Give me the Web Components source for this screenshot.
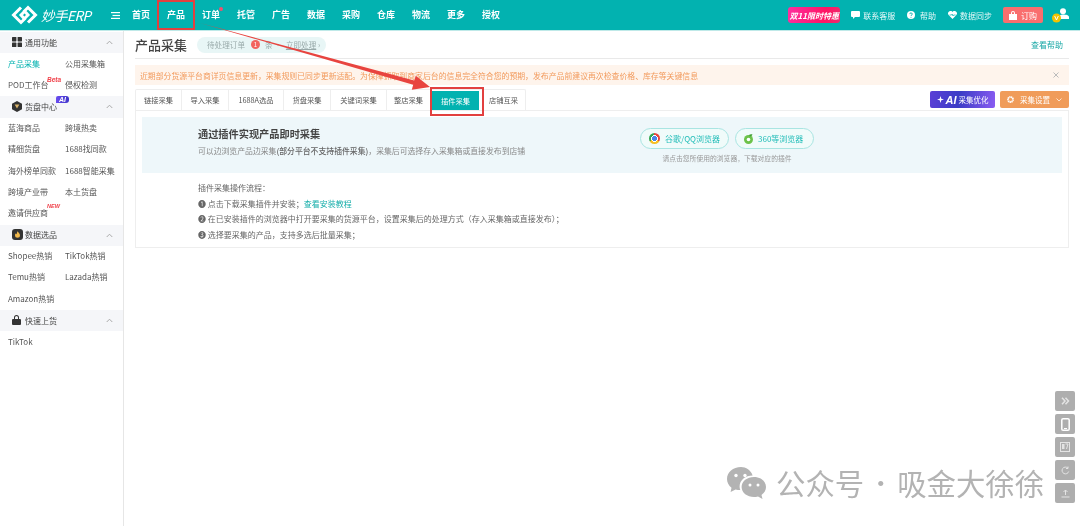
<!doctype html>
<html lang="zh">
<head>
<meta charset="utf-8">
<title>产品采集</title>
<style>
  html, body { margin: 0; height: 100%; background: #fff; overflow: hidden; }
  body { font: 8px "Noto Sans CJK SC", "Liberation Sans", sans-serif; color: #555; }
  app-shell { filter: blur(0.3px); }
</style>
</head>
<body>
<app-shell>
  <app-topbar slot="top">
    <nav-item>首页</nav-item>
    <nav-item>产品</nav-item>
    <nav-item dot>订单</nav-item>
    <nav-item>托管</nav-item>
    <nav-item>广告</nav-item>
    <nav-item>数据</nav-item>
    <nav-item>采购</nav-item>
    <nav-item>仓库</nav-item>
    <nav-item>物流</nav-item>
    <nav-item>更多</nav-item>
    <nav-item>授权</nav-item>
  </app-topbar>

  <side-nav slot="side">
    <side-group label="通用功能">
      <svg slot="icon" width="10" height="10" viewBox="0 0 10 10" fill="#333"><rect width="4.400" height="4.400" rx=".6"/><rect x="5.600" width="4.400" height="4.400" rx=".6"/><rect y="5.600" width="4.400" height="4.400" rx=".6"/><rect x="5.600" y="5.600" width="4.400" height="4.400" rx=".6"/></svg>
      <side-link active>产品采集</side-link>
      <side-link>公用采集箱</side-link>
      <side-link>POD工作台<mini-tag kind="beta">Beta</mini-tag></side-link>
      <side-link>侵权检测</side-link>
    </side-group>
    <side-group label="货盘中心">
      <svg slot="icon" width="10" height="11" viewBox="0 0 10 11"><path d="M5 0 10 2.800v5.400L5 11 0 8.200V2.800z" fill="#333"/><path d="M2.600 3.600h4.800L5 7.400z" fill="#d9b36a"/></svg>
      <mini-tag slot="tag" kind="ai">AI</mini-tag>
      <side-link>蓝海商品</side-link>
      <side-link>跨境热卖</side-link>
      <side-link>精细货盘</side-link>
      <side-link>1688找同款</side-link>
      <side-link>海外榜单同款</side-link>
      <side-link>1688智能采集</side-link>
      <side-link>跨境产业带</side-link>
      <side-link>本土货盘</side-link>
      <side-link>邀请供应商<mini-tag kind="new">NEW</mini-tag></side-link>
    </side-group>
    <side-group label="数据选品">
      <svg slot="icon" width="11" height="11" viewBox="0 0 11 11"><rect width="11" height="11" rx="3" fill="#333"/><path d="M5.500 2.200c.5 1.200 2.500 2 2.500 4.100a2.500 2.500 0 0 1-5 0c0-1 .5-1.500 1-2 .2.600.5.800.8.900-.1-1 .2-2.200.7-3z" fill="#f2b84b"/></svg>
      <side-link>Shopee热销</side-link>
      <side-link>TikTok热销</side-link>
      <side-link>Temu热销</side-link>
      <side-link>Lazada热销</side-link>
      <side-link>Amazon热销</side-link>
    </side-group>
    <side-group label="快速上货">
      <svg slot="icon" width="9" height="10" viewBox="0 0 9 10" fill="#333"><path d="M2 4V2.600a2.500 2.500 0 0 1 5 0V4H6V2.600a1.500 1.500 0 0 0-3 0V4z"/><rect y="4" width="9" height="6" rx="1"/></svg>
      <side-link>TikTok</side-link>
    </side-group>
  </side-nav>

  <collect-page slot="main">
    <page-head></page-head>
    <notice-bar>近期部分货源平台商详页信息更新，采集规则已同步更新适配。为保障抓取到商家后台的信息完全符合您的预期，发布产品前建议再次检查价格、库存等关键信息</notice-bar>
    <tab-bar>
      <tab-item style="width:46px">链接采集</tab-item>
      <tab-item style="width:47px">导入采集</tab-item>
      <tab-item style="width:55px">1688A选品</tab-item>
      <tab-item style="width:47px">货盘采集</tab-item>
      <tab-item style="width:56px">关键词采集</tab-item>
      <tab-item style="width:44px">整店采集</tab-item>
      <tab-item active style="width:47px">插件采集</tab-item>
      <tab-item style="width:43px">店铺互采</tab-item>
    </tab-bar>
    <plugin-panel></plugin-panel>
  </collect-page>

  <float-tools slot="over"></float-tools>
  <water-mark slot="over"></water-mark>
  <note-layer slot="over"></note-layer>
</app-shell>

<script>
// small helper: each element is a class with its own shadow root
function define(name, html) {
  const template = document.createElement("template");
  template.innerHTML = html;
  customElements.define(name, class extends HTMLElement {
    constructor() {
      super();
      this.attachShadow({ mode: "open" }).appendChild(template.content.cloneNode(true));
    }
    connectedCallback() {
      const label = this.shadowRoot.querySelector("[data-label]");
      if (label) label.textContent = this.getAttribute("label");
    }
  });
}

define("app-shell", `
<style>
  :host { display: grid; grid-template: 31px 1fr / 124px 1fr; width: 1080px; height: 526px; position: relative; overflow: hidden; }
  ::slotted([slot=top]) { grid-column: 1 / 3; }
</style>
<slot name="top"></slot>
<slot name="side"></slot>
<slot name="main"></slot>
<slot name="over"></slot>`);

define("app-topbar", `
<style>
  :host { display: flex; align-items: center; height: 31px; background: #02b2b0; border-bottom: 1px solid #bfe9e8; box-sizing: border-box; color: #fff; }
  .logo { display: flex; align-items: center; width: 111px; padding-left: 11px; box-sizing: border-box; flex: none; }
  .brand { font: italic 400 13.500px "Noto Sans CJK SC", "Liberation Sans", sans-serif; margin-left: 2px; letter-spacing: -.5px; white-space: nowrap; }
  .menu { width: 21px; flex: none; display: flex; }
  nav { display: flex; gap: 17px; flex: none; }
  .right { margin-left: auto; display: flex; align-items: center; font-size: 8px; padding-right: 11px; }
  .promo { width: 52px; height: 16px; border-radius: 3px; background: linear-gradient(100deg, #ff2fa0, #ff1464 70%, #ef2b6d); font: italic 700 8px "Noto Sans CJK SC", sans-serif; display: flex; align-items: center; justify-content: center; white-space: nowrap; margin-right: 11px; }
  .link { display: flex; align-items: center; gap: 3px; margin-right: 12px; white-space: nowrap; color: #e6f8f8; }
  .buy { width: 40px; height: 16px; border-radius: 2px; background: #f96e6e; display: flex; align-items: center; justify-content: center; gap: 4px; margin: 0 9px 0 -1px; color: #fff; }
  .avatar { display: block; }
</style>
<div class="logo">
  <svg width="28" height="20" viewBox="0 0 28 20" fill="none" stroke="#fff" stroke-width="3"><path d="M10 2.500 2.500 10l7.500 7.500 3.500-3.500-3.500-4 3.500-3.500"/><path d="M17 17.500 24.500 10 17 2.500 13.500 6l3.500 4-3.500 3.500"/></svg>
  <span class="brand">妙手ERP</span>
</div>
<div class="menu"><svg width="9" height="7" viewBox="0 0 9 7" fill="#fff"><rect width="9" height="1.200"/><rect x="1.500" y="2.900" width="7.500" height="1.200"/><rect y="5.800" width="9" height="1.200"/></svg></div>
<nav><slot></slot></nav>
<div class="right">
  <div class="promo">双11限时特惠</div>
  <div class="link"><svg width="9" height="8" viewBox="0 0 9 8" fill="#fff"><path d="M1 0h7a1 1 0 0 1 1 1v4a1 1 0 0 1-1 1H4L2 8V6H1a1 1 0 0 1-1-1V1a1 1 0 0 1 1-1z"/></svg>联系客服</div>
  <div class="link"><svg width="8" height="8" viewBox="0 0 8 8"><circle cx="4" cy="4" r="4" fill="#fff"/><path d="M2.800 3.100a1.200 1.200 0 1 1 1.700 1.100c-.4.200-.5.400-.5.800" fill="none" stroke="#02b2b0"/><circle cx="4" cy="6.200" r=".5" fill="#02b2b0"/></svg>&nbsp;帮助</div>
  <div class="link"><svg width="9" height="8" viewBox="0 0 9 8"><path d="M4.500 8 .6 4A2.300 2.300 0 0 1 4.500 1a2.300 2.300 0 0 1 3.900 3z" fill="#fff"/><path d="M1.500 4h2l.7-1 .8 2 .6-1h2" fill="none" stroke="#02b2b0" stroke-width=".7"/></svg>数据同步</div>
  <div class="buy"><svg width="8" height="9" viewBox="0 0 8 9" fill="#fff"><path d="M2 3V2a2 2 0 0 1 4 0v1h2v6H0V3zm1 0h2V2a1 1 0 0 0-2 0z"/></svg>订购</div>
  <svg class="avatar" width="17" height="15" viewBox="0 0 17 15"><circle cx="11" cy="3.200" r="3" fill="#fff"/><path d="M6 11c0-3 2-4.500 5-4.500s6 .8 6 2.500v2z" fill="#fff"/><circle cx="4.500" cy="10" r="4.500" fill="#f3c200"/><path d="M2.700 8l1.800 4 1.800-4" fill="none" stroke="#fff" stroke-width="1"/></svg>
</div>`);

define("nav-item", `
<style>
  :host { display: block; position: relative; font-size: 9px; font-weight: 700; line-height: 12px; width: 18px; white-space: nowrap; color: #fff; }
  :host([dot])::after { content: ""; position: absolute; right: -3px; top: -2px; width: 4px; height: 4px; border-radius: 50%; background: #f0506e; }
</style>
<slot></slot>`);

define("side-nav", `
<style>
  :host { display: block; border-right: 1px solid #e6e6e6; box-sizing: border-box; padding-top: 1px; background: #fff; }
</style>
<slot></slot>`);

define("side-group", `
<style>
  :host { display: block; }
  header { position: relative; display: flex; align-items: center; height: 21.400px; background: #f5f6f9; color: #444; padding: 0 0 1px 12px; box-sizing: border-box; }
  .ico { width: 13px; display: flex; flex: none; }
  .chev { position: absolute; right: 10px; top: 8px; }
  .tag { position: absolute; left: 56px; top: 0; }
  .grid { display: grid; grid-template-columns: 57px 1fr; grid-auto-rows: 21.400px; padding-left: 8px; }
</style>
<header>
  <span class="ico"><slot name="icon"></slot></span>
  <span data-label></span>
  <span class="tag"><slot name="tag"></slot></span>
  <svg class="chev" width="7" height="5" viewBox="0 0 7 5" fill="none" stroke="#aaa"><path d="M.7 4 3.500 1.200 6.300 4"/></svg>
</header>
<div class="grid"><slot></slot></div>`);

define("side-link", `
<style>
  :host { display: flex; align-items: center; position: relative; white-space: nowrap; color: #555; padding-bottom: 2px; box-sizing: border-box; }
  :host([active]) { color: #02b2b0; }
</style>
<slot></slot>`);

define("mini-tag", `
<style>
  :host { display: block; white-space: nowrap; font: italic 700 6.500px/7px "Liberation Sans", sans-serif; color: #f0414a; }
  :host([kind=beta]) { position: absolute; left: 39px; top: 1px; }
  :host([kind=new]) { position: absolute; left: 39px; top: 0; font-size: 5.500px; }
  :host([kind=ai]) { background: linear-gradient(90deg, #6a4df0, #3f35c8); color: #fff; border-radius: 2px 3px 3px 0; padding: 0 3px; font-size: 7px; }
</style>
<slot></slot>`);

define("collect-page", `
<style>
  :host { display: block; padding: 0 11px 0 11px; min-width: 0; background: #fff; }
</style>
<slot></slot>`);

define("page-head", `
<style>
  :host { display: flex; align-items: center; height: 27px; border-bottom: 1px solid #e9e9e9; }
  h1 { font-size: 13px; font-weight: 500; color: #444; margin: 0 10px 0 0; line-height: 27px; }
  .pill { display: flex; align-items: center; width: 129px; height: 16px; background: #e8f6f6; border-radius: 8px; padding-left: 10px; box-sizing: border-box; color: #9aa; white-space: nowrap; font-size: 7.600px; }
  .n { width: 9px; height: 9px; border-radius: 50%; background: #f2645f; color: #fff; font-size: 6px; line-height: 9px; text-align: center; margin: 0 5px 0 6px; }
  u { margin-left: 4px; }
  a { margin-left: auto; margin-right: 6px; color: #1aa8a6; }
</style>
<h1>产品采集</h1>
<div class="pill">待处理订单<span class="n">1</span>条 · <u>立即处理</u>&nbsp;›</div>
<a>查看帮助</a>`);

define("notice-bar", `
<style>
  :host { display: flex; align-items: center; height: 20px; margin-top: 6px; background: #fef4ec; color: #f29a5c; padding-left: 5px; white-space: nowrap; position: relative; font-size: 7.870px; }
  svg { position: absolute; right: 10px; top: 7px; }
</style>
<slot></slot>
<svg width="6" height="6" viewBox="0 0 6 6" stroke="#bbb" fill="none"><path d="M.5.500l5 5M5.500.500l-5 5"/></svg>`);

define("tab-bar", `
<style>
  :host { display: flex; align-items: flex-end; height: 21px; margin-top: 4px; }
  .tabs { display: flex; border: 1px solid #eee; border-bottom: 0; border-radius: 2px 2px 0 0; height: 21px; box-sizing: border-box; }
  .tools { margin-left: auto; display: flex; gap: 5px; align-self: flex-start; margin-top: 2px; }
  .ai { width: 65px; height: 17px; border-radius: 2px; background: linear-gradient(100deg, #5a3fd6, #3b3cc6 45%, #8a5cf2); color: #fff; display: flex; align-items: center; justify-content: center; gap: 2px; white-space: nowrap; font-size: 7.500px; }
  .ai b { font: italic 700 11px "Liberation Sans", sans-serif; }
  .set { width: 69px; height: 17px; border-radius: 2px; background: #f09c5a; color: #fff; display: flex; align-items: center; justify-content: center; gap: 6px; white-space: nowrap; font-size: 7.500px; }
</style>
<div class="tabs"><slot></slot></div>
<div class="tools">
  <div class="ai"><svg width="7" height="7" viewBox="0 0 7 7" fill="#fff"><path d="M3.500 0 4.300 2.700 7 3.500 4.300 4.300 3.500 7 2.700 4.300 0 3.500 2.700 2.700z"/></svg><b>AI</b>采集优化</div>
  <div class="set"><svg width="7" height="7" viewBox="0 0 7 7"><circle cx="3.500" cy="3.500" r="2.500" fill="none" stroke="#fff" stroke-width="1.800" stroke-dasharray="1.300 .4"/></svg>采集设置<svg width="6" height="4" viewBox="0 0 6 4" fill="none" stroke="#ffe3cc"><path d="M.5.500 3 3 5.500.500"/></svg></div>
</div>`);

define("tab-item", `
<style>
  :host { display: flex; align-items: center; justify-content: center; box-sizing: border-box; border-right: 1px solid #eee; white-space: nowrap; color: #555; font-size: 7.300px; }
  :host(:last-child) { border-right: 0; }
  :host([active]) { background: #02b2b0; color: #fff; margin: 1px 3px 0 1px; border-right: 0; }
</style>
<slot></slot>`);

define("plugin-panel", `
<style>
  :host { display: block; height: 138px; border: 1px solid #eee; box-sizing: border-box; padding: 6px; }
  .hero { display: flex; height: 56px; background: #eef7fa; box-sizing: border-box; padding-left: 56px; }
  .copy { width: 442px; flex: none; }
  h2 { margin: 9px 0 4px; font-size: 10.200px; line-height: 15px; font-weight: 700; color: #444; }
  .copy p { margin: 0; color: #888; font-size: 7.850px; line-height: 11px; white-space: nowrap; }
  .copy b { color: #666; font-weight: 500; }
  .dl { padding-top: 11px; width: 174px; }
  .btns { display: flex; gap: 6px; }
  .btn { display: flex; align-items: center; gap: 5px; height: 21px; border: 1px solid #a9e5e2; border-radius: 11px; box-sizing: border-box; padding-left: 8px; color: #22bdb8; background: #f0fbfa; white-space: nowrap; }
  .chrome { width: 89px; }
  .s360 { width: 79px; }
  .tip { margin-top: 4px; font-size: 6.800px; line-height: 10px; color: #999; text-align: center; white-space: nowrap; }
  .steps { margin: 7px 0 0 56px; color: #666; white-space: nowrap; }
  .steps div { height: 15.700px; line-height: 15.700px; }
  .steps a { color: #16aeaa; }
  .chr { display: block; width: 11px; height: 11px; border-radius: 50%; background: radial-gradient(circle, #4a86e8 0 2.300px, #fff 2.400px 3.400px, transparent 3.500px), conic-gradient(#e8453c 0 120deg, #f6c026 120deg 240deg, #34a853 240deg); }
</style>
<div class="hero">
  <div class="copy">
    <h2>通过插件实现产品即时采集</h2>
    <p>可以边浏览产品边采集<b>(部分平台不支持插件采集)</b>，采集后可选择存入采集箱或直接发布到店铺</p>
  </div>
  <div class="dl">
    <div class="btns">
      <div class="btn chrome"><span class="chr"></span>谷歌/QQ浏览器</div>
      <div class="btn s360"><svg width="9" height="10" viewBox="0 0 9 10"><circle cx="4.500" cy="5.500" r="4.500" fill="#6cc24a"/><circle cx="4.500" cy="5.500" r="1.800" fill="#fff"/><path d="M5 1c1-1 2.500-1 3.500-.5C8 1.500 7 2.500 6 2.500z" fill="#3f9e2f"/></svg>360等浏览器</div>
    </div>
    <div class="tip">请点击您所使用的浏览器，下载对应的插件</div>
  </div>
</div>
<div class="steps">
  <div>插件采集操作流程：</div>
  <div>❶ 点击下载采集插件并安装；<a>查看安装教程</a></div>
  <div>❷ 在已安装插件的浏览器中打开要采集的货源平台，设置采集后的处理方式（存入采集箱或直接发布）；</div>
  <div>❸ 选择要采集的产品，支持多选后批量采集；</div>
</div>`);

define("float-tools", `
<style>
  :host { position: absolute; left: 1055px; top: 391px; display: flex; flex-direction: column; gap: 3px; }
  div { width: 20px; height: 20px; border-radius: 2px; background: #aeaeae; display: flex; align-items: center; justify-content: center; }
</style>
<div><svg width="9" height="8" viewBox="0 0 9 8" fill="none" stroke="#e4e4e4" stroke-width="1.500"><path d="M1 .8 4 4 1 7.200M4.500 .8 7.500 4 4.500 7.200"/></svg></div>
<div><svg width="9" height="13" viewBox="0 0 9 13"><rect x=".8" y=".8" width="7.400" height="11.400" rx="1.300" fill="none" stroke="#fff" stroke-width="1.500"/><rect x="3" y="10" width="3" height="1" fill="#fff"/></svg></div>
<div><svg width="10" height="10" viewBox="0 0 10 10"><rect x=".5" y=".5" width="9" height="9" fill="none" stroke="#e4e4e4"/><rect x="2" y="2" width="2.500" height="5" fill="#e4e4e4"/><path d="M5.500 2H8L6.500 7" fill="none" stroke="#e4e4e4"/></svg></div>
<div><svg width="9" height="9" viewBox="0 0 9 9" fill="none" stroke="#e4e4e4"><path d="M7.700 5.500A3.400 3.400 0 1 1 6.800 2"/><path d="M7 .5V2.500H5" /></svg></div>
<div><svg width="9" height="9" viewBox="0 0 9 9" fill="none" stroke="#e4e4e4"><path d="M4.500 6V1M2.500 3 4.500 1l2 2M.5 8h8"/></svg></div>`);

define("water-mark", `
<style>
  :host { position: absolute; left: 726px; top: 462px; display: flex; align-items: center; gap: 9px; color: #b3b3b3; font-size: 29.400px; line-height: 40px; white-space: nowrap; font-weight: 400; pointer-events: none; }
  .sep { width: 33px; text-align: center; font-size: 24px; }
  .txt { display: flex; }
</style>
<svg width="41" height="33" viewBox="0 0 41 33" fill="#b3b3b3">
  <path d="M15 1C7 1 1 6 1 13c0 3.500 1.700 6.500 4.500 8.700L4.600 26l5-2.600c1.500.4 3 .6 4.700.6-.5-1.300-.7-2.500-.7-3.600 0-6.500 6-11 13-11-1.500-5-6.700-8.400-11.600-8.400z"/>
  <path d="M28 11c-6.800 0-12.400 4.300-12.400 10s5.600 10 12.400 10c1.300 0 2.700-.2 4-.6l4.500 2.500-1-3.900c2.800-2 4.500-4.800 4.500-8 0-5.700-5.200-10-12-10z"/>
  <circle cx="10" cy="9.500" r="1.700" fill="#fff"/><circle cx="19" cy="9.500" r="1.700" fill="#fff"/><circle cx="24" cy="19" r="1.500" fill="#fff"/><circle cx="32" cy="19" r="1.500" fill="#fff"/>
</svg>
<div class="txt"><span>公众号</span><span class="sep">·</span><span>吸金大徐徐</span></div>`);

define("note-layer", `
<style>
  :host { position: absolute; left: 0; top: 0; width: 1080px; height: 526px; pointer-events: none; }
  .box { position: absolute; border: 2px solid #e2403f; box-sizing: border-box; }
  .a { left: 157px; top: 0; width: 38px; height: 30px; }
  .b { left: 430px; top: 87px; width: 54px; height: 29px; }
  svg { position: absolute; left: 0; top: 0; }
</style>
<div class="box a"></div>
<div class="box b"></div>
<svg width="1080" height="526"><polygon points="200,23 414.200,80.400 415.800,75.800 430,87 411.800,89.800 413.200,84.800" fill="#e8443f"/></svg>`);
</script>
</body>
</html>
